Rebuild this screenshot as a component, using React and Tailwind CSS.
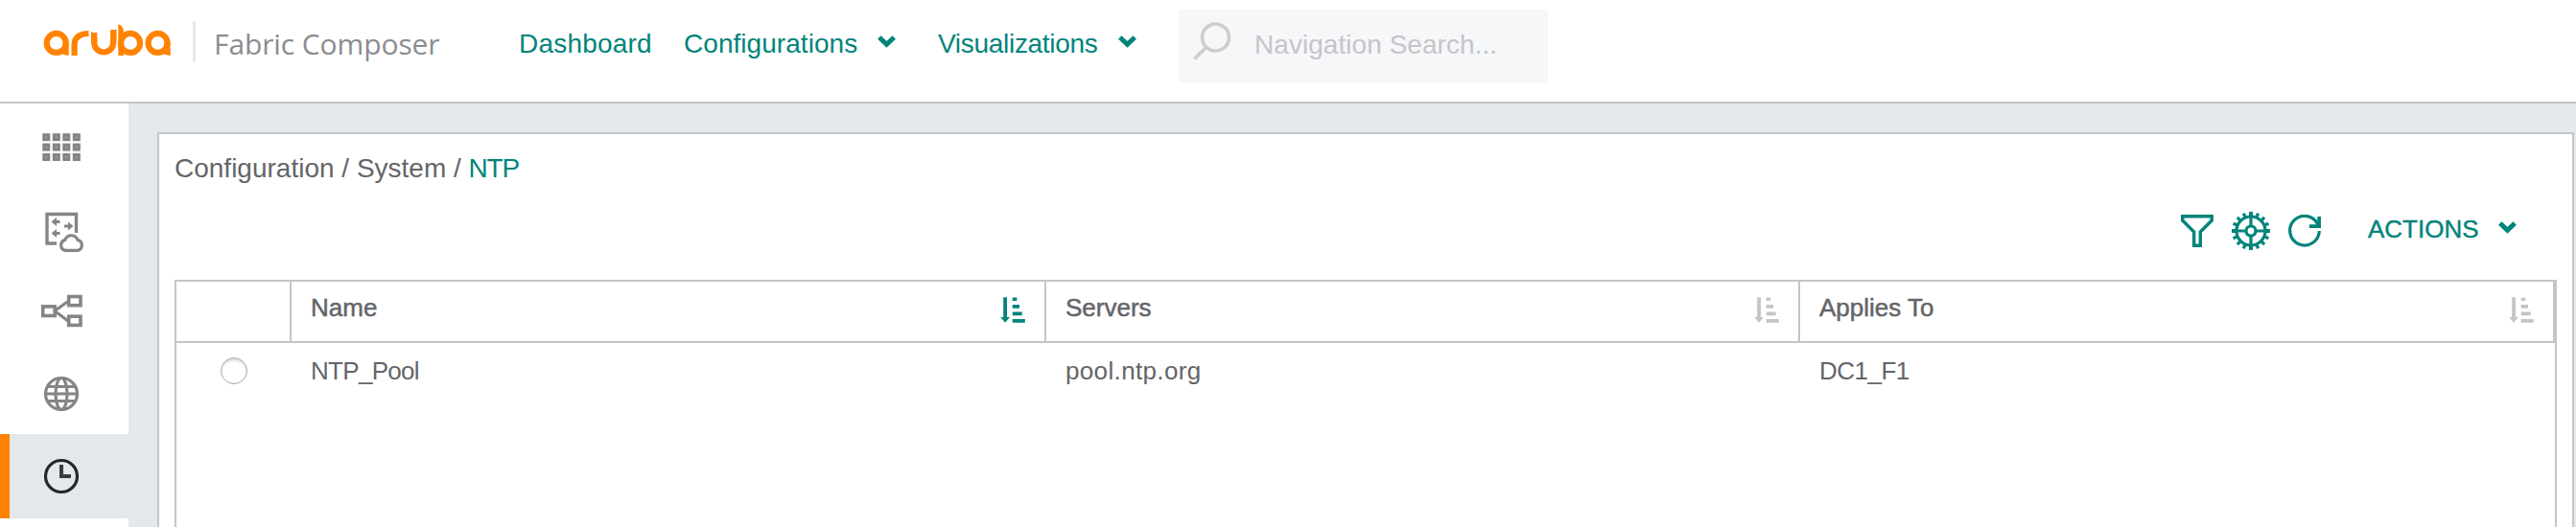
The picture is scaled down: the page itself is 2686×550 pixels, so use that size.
const TEAL = '#01847a';

function Logo() {
  return (
    <svg className="block shrink-0" width="134" height="36" viewBox="0 0 134 36" fill="none" stroke="#ff8300" strokeWidth="6.2">
      <circle cx="13.700" cy="20.900" r="10" />
      <path d="M23.700 20V27.500Q24.500 31 26.800 34.300Q21 33.500 17 30L22 26Z" fill="#ff8300" strokeWidth="0" />
      <path d="M23.700 20V33" strokeWidth="6" />
      <path d="M32.600 34V22Q33 11.400 47.500 11" />
      <path d="M53.200 10V20.500A10 10 0 0 0 73.200 20.500V7" />
      <path d="M50 9.200Q55 10.500 56.400 15L56.400 20H50ZM76.400 6.500Q71 8 70 14V20H76.400Z" fill="#ff8300" strokeWidth="0" />
      <path d="M78.300 1Q83.500 3 84 9V34H78.300Z" fill="#ff8300" strokeWidth="0" />
      <circle cx="91" cy="20.900" r="10" />
      <circle cx="119.500" cy="20.900" r="10" />
      <path d="M129.500 20V33" strokeWidth="6" />
      <path d="M126.500 27.500L132.500 27.500V34.300Q127 33.500 123 30Z" fill="#ff8300" strokeWidth="0" />
    </svg>
  );
}

function Chevron({ className = '' }) {
  return (
    <svg className={`block shrink-0 ${className}`} width="19" height="13" viewBox="0 0 19 13" fill="none" stroke={TEAL} strokeWidth="5">
      <path d="M1.800 2L9.500 9.400L17.200 2" />
    </svg>
  );
}

function GridIcon() {
  const cells = [];
  for (let r = 0; r < 3; r++) for (let c = 0; c < 4; c++) cells.push([c, r]);
  return (
    <svg className="block" width="44" height="44" viewBox="0 0 44 44">
      {cells.map(([c, r]) => (
        <rect key={`${c}-${r}`} x={3.900 + c * 10.500} y={10.800 + r * 10.400} width="4.800" height="4.800" fill="#a8a8a8" stroke="#848484" strokeWidth="3.200" />
      ))}
    </svg>
  );
}

function FabricIcon() {
  return (
    <svg className="block overflow-visible" width="48" height="48" viewBox="0 0 48 48" fill="none" stroke="#858585" strokeWidth="3.400">
      <path d="M19 40H9V9.500H39.500V29" />
      <path d="M15 17.500H22.500M27 22H34M15 29.500H22.500" strokeWidth="3" />
      <path d="M19 13L13.500 17.500L19 22ZM31 17.500L36.500 22L31 26.500ZM19 25L13.500 29.500L19 34Z" fill="#858585" stroke="none" />
      <path d="M28 47.400A5.700 5.700 0 0 1 27.800 36.400A7 7 0 0 1 41 36.400A5.700 5.700 0 0 1 41.200 47.400Z" strokeWidth="3.200" />
    </svg>
  );
}

function TopologyIcon() {
  return (
    <svg className="block" width="44" height="36" viewBox="0 0 44 36" fill="none" stroke="#858585" strokeWidth="3.600">
      <rect x="2.700" y="12.900" width="12.500" height="9.600" />
      <rect x="29.700" y="2.500" width="12.300" height="9.200" />
      <rect x="29.700" y="23.200" width="12.300" height="9.200" />
      <path d="M15 17.500L29 7.500M15 17.500L29 28" strokeWidth="3.200" />
    </svg>
  );
}

function GlobeIcon() {
  return (
    <svg className="block" width="40" height="40" viewBox="0 0 40 40" fill="none" stroke="#858585" strokeWidth="3.200">
      <circle cx="20" cy="20" r="16.500" />
      <ellipse cx="20" cy="20" rx="6" ry="16.500" />
      <path d="M5.500 12.500H34.500M3.500 20H36.500M5.500 27.500H34.500" />
    </svg>
  );
}

function ClockIcon() {
  return (
    <svg className="block" width="40" height="40" viewBox="0 0 40 40" fill="none" stroke="#242627">
      <circle cx="20" cy="20" r="16.500" strokeWidth="3.200" />
      <path d="M20 8V20H30" strokeWidth="4" stroke="#3a3c3d" />
    </svg>
  );
}

function FilterIcon() {
  return (
    <svg className="block" width="34" height="34" viewBox="0 0 34 34" fill="none" stroke={TEAL} strokeWidth="3.400">
      <path d="M1.700 1.700H32.300V6L20.300 18V32.300H13.700V18L1.700 6Z" />
    </svg>
  );
}

function GearIcon() {
  const teeth = Array.from({ length: 16 }, (_, i) => i * 22.5);
  return (
    <svg className="block" width="40" height="40" viewBox="0 0 40 40" fill="none" stroke={TEAL} strokeWidth="3.200">
      <circle cx="20" cy="20" r="15" />
      <circle cx="20" cy="20" r="5" />
      {teeth.map((a) => (
        <path key={a} d="M20 0V4.500" transform={`rotate(${a} 20 20)`} strokeWidth={a % 90 === 0 ? 4 : 3.200} />
      ))}
      <path d="M20 4V15M20 25V36M4 20H15M25 20H36" />
    </svg>
  );
}

function RefreshIcon() {
  return (
    <svg className="block" width="34" height="34" viewBox="0 0 34 34" fill="none" stroke={TEAL} strokeWidth="3.200">
      <path d="M32.300 17A15.300 15.300 0 1 1 31 10.500" />
      <path d="M32.200 2V12.200H22" strokeWidth="3.800" />
    </svg>
  );
}

function SortIcon({ color }) {
  return (
    <svg className="block shrink-0" width="26" height="27" viewBox="0 0 26 27" fill={color}>
      <path d="M3.200 0.300H7V21H10L5.100 26.700L0.200 21H3.200Z" />
      <path d="M12.700 0.600H17.300V4H12.700ZM12.700 8H20V11.700H12.700ZM12.700 15.500H22.700V19.200H12.700ZM12.700 23H25.800V26.700H12.700Z" />
    </svg>
  );
}

const sideItems = [
  { id: 'apps', icon: <GridIcon />, shift: '' },
  { id: 'fabrics', icon: <FabricIcon />, shift: '' },
  { id: 'topology', icon: <TopologyIcon />, shift: 'pt-[2px]' },
  { id: 'network', icon: <GlobeIcon />, shift: 'pt-[2px]' },
];

function HeaderCell({ label, color }) {
  return (
    <div className="flex h-[62px] justify-between border-r-2 border-[#c4c5c9] px-5 pt-[12px]">
      <span className="leading-[30px] [-webkit-text-stroke:0.5px_#646569]">{label}</span>
      <div className="mt-1">
        <SortIcon color={color} />
      </div>
    </div>
  );
}

export default function App() {
  return (
    <div className="flex h-[550px] w-[2686px] flex-col overflow-hidden bg-white font-['Liberation_Sans',Arial,sans-serif] text-[#646569]">
      <header className="flex h-[108px] shrink-0 items-start border-b-2 border-[#c4c5c9] pl-[45px] text-[28px] leading-[32px] text-[#01847a]">
        <div className="mt-[24px] w-[134px]">
          <Logo />
        </div>
        <div className="ml-[22px] mt-[22px] h-[43px] w-[3px] rounded-sm bg-[#e6e7e8]" />
        <div className="ml-[19px] mt-[26px] w-[318px] whitespace-nowrap font-['Open_Sans',sans-serif] text-[30px] leading-[40px] tracking-[-0.1px] text-[#8b8c90]">Fabric Composer</div>
        <nav className="flex items-start whitespace-nowrap pt-[30px]">
          <span className="w-[172px] tracking-[0.2px]">Dashboard</span>
          <span className="w-[202px] tracking-[0.05px]">Configurations</span>
          <Chevron className="mt-[7px]" />
          <span className="ml-[44px] w-[188px] tracking-[-0.3px]">Visualizations</span>
          <Chevron className="mt-[7px]" />
        </nav>
        <div className="ml-[44px] mt-[10px] flex h-[76px] w-[385px] items-start bg-[#f6f7f9] pl-[15px] pt-[13px] text-[#c4c5c9]">
          <svg className="block shrink-0" width="42" height="42" viewBox="0 0 42 42" fill="none" stroke="#cccdcf" strokeWidth="3.600" strokeLinecap="round">
            <circle cx="23.500" cy="16" r="14" />
            <path d="M13.500 26.500L2.500 37.500" strokeWidth="3.800" />
          </svg>
          <span className="ml-[22px] mt-[8px] whitespace-nowrap tracking-[0.05px]">Navigation Search...</span>
        </div>
      </header>

      <div className="flex min-h-0 flex-1 bg-[#e4e8eb]">
        <aside className="flex w-[134px] shrink-0 flex-col bg-white pt-px">
          {sideItems.map((item) => (
            <div key={item.id} className={`flex h-[86px] w-[128px] shrink-0 items-center justify-center ${item.shift}`}>
              {item.icon}
            </div>
          ))}
          <div className="flex h-[88px] shrink-0 items-center border-l-[10px] border-[#ff8300] bg-[#e4e8eb] pl-[34px]">
            <ClockIcon />
          </div>
        </aside>

        <main className="ml-[30px] mt-[30px] flex w-[2520px] shrink-0 flex-col border-x-2 border-t-2 border-[#c4c5c9] bg-white px-4">
          <div className="pt-[20px] text-[28px] leading-[32px]">
            Configuration / System / <span className="tracking-[-1.2px] text-[#01847a]">NTP</span>
          </div>
          <div className="flex h-[100px] items-start justify-end pr-[42px] pt-[29px] text-[26px] text-[#01847a]">
            <div className="mt-[3px]"><FilterIcon /></div>
            <div className="ml-[19px]"><GearIcon /></div>
            <div className="ml-[19px] mt-[3px]"><RefreshIcon /></div>
            <span className="ml-[49px] mt-[3px] w-[136px] leading-[30px] [-webkit-text-stroke:0.4px_#01847a]">ACTIONS</span>
            <Chevron className="mt-[10px]" />
          </div>
          <section className="flex min-h-0 flex-1 flex-col border-x-2 border-t-2 border-[#c4c5c9] text-[26px] leading-[30px]">
            <div className="grid shrink-0 grid-cols-[120px_787px_786px_787px] border-b-2 border-[#c4c5c9]">
              <div className="border-r-2 border-[#c4c5c9]" />
              <HeaderCell label="Name" color="#01847a" />
              <HeaderCell label="Servers" color="#c4c5c9" />
              <HeaderCell label="Applies To" color="#c4c5c9" />
            </div>
            <div className="grid grid-cols-[120px_787px_786px_787px] pt-[14px]">
              <div className="flex pl-[46px] pt-px">
                <div className="size-7 rounded-full border border-[#a9a9ab] bg-white shadow-[inset_0_3px_3px_-1px_#d0d0d0]" />
              </div>
              <span className="pl-5 tracking-[-0.7px]">NTP_Pool</span>
              <span className="pl-5 tracking-[0.35px]">pool.ntp.org</span>
              <span className="pl-5 tracking-[-0.5px]">DC1_F1</span>
            </div>
          </section>
        </main>
      </div>
    </div>
  );
}
